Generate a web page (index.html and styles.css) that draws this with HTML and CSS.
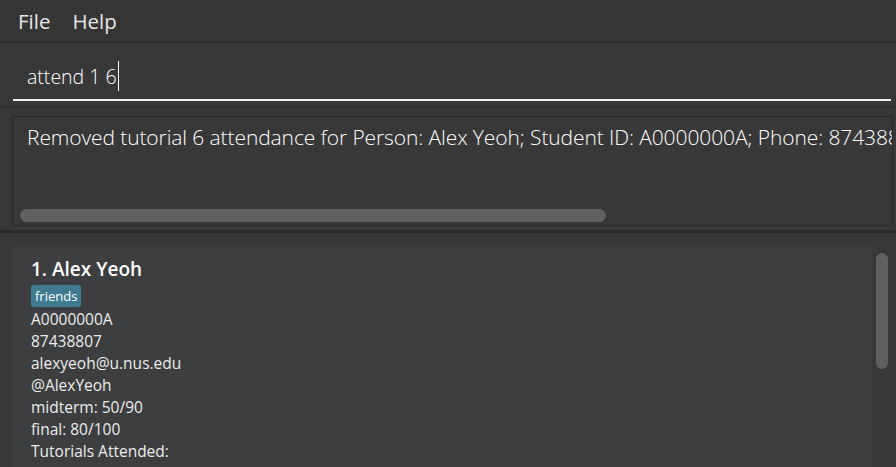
FILE: index.html
```html
<!DOCTYPE html>
<html>
<head>
<meta charset="utf-8">
<link rel="stylesheet" href="styles.css">
</head>
<body>
<div class="app">
  <div class="menubar">
    <span class="menu-item">File</span>
    <span class="menu-item">Help</span>
  </div>
  <div class="command-pane">
    <div class="command-field">
      <span class="command-text">attend 1 6</span><span class="caret"></span>
    </div>
  </div>
  <div class="result-pane">
    <div class="result-box">
      <div class="result-text">Removed tutorial 6 attendance for Person: Alex Yeoh; Student ID: A0000000A; Phone: 87438807</div>
      <div class="hscroll"><div class="hthumb"></div></div>
    </div>
  </div>
  <div class="list-pane">
    <div class="list">
      <div class="card">
        <div class="name">1. Alex Yeoh</div>
        <div class="tags"><span class="tag">friends</span></div>
        <div class="line">A0000000A</div>
        <div class="line">87438807</div>
        <div class="line">alexyeoh@u.nus.edu</div>
        <div class="line">@AlexYeoh</div>
        <div class="line">midterm: 50/90</div>
        <div class="line">final: 80/100</div>
        <div class="line">Tutorials Attended:</div>
      </div>
    </div>
    <div class="vscroll"><div class="vthumb"></div></div>
  </div>
</div>
</body>
</html>
```
FILE: styles.css
```css
html, body {
  margin: 0;
  padding: 0;
  background: #383838;
  overflow: hidden;
}
.app {
  width: 896px;
  height: 467px;
  display: flex;
  flex-direction: column;
  font-family: "Open Sans", "Noto Sans", sans-serif;
  color: #ffffff;
}
.menubar {
  height: 42px;
  background: #353535;
  border-bottom: 1px solid #2b2b2b;
  display: flex;
  align-items: center;
  padding-left: 18px;
  gap: 22px;
  font-size: 20.5px;
  color: #e6e6e6;
  flex: none;
}
.command-pane {
  height: 65px;
  box-sizing: border-box;
  padding: 0 5px 0 13px;
  display: flex;
  align-items: flex-end;
  border-bottom: 2px solid #2e2e2e;
  flex: none;
}
.command-field {
  flex: 1;
  height: 46px;
  margin-bottom: 5px;
  border-bottom: 2px solid #f0f0f0;
  display: flex;
  align-items: center;
  padding-left: 14px;
  font-size: 19.5px;
  font-weight: 300;
}
.caret {
  width: 1px;
  height: 30px;
  background: #ffffff;
  margin-left: 1px;
}
.result-pane {
  height: 125px;
  padding: 8px 3px 0 12px;
  border-bottom: 3px solid #2b2b2b;
  flex: none;
  box-sizing: border-box;
}
.result-box {
  height: 110px;
  border: 1px solid #2a2a2a;
  box-sizing: border-box;
  overflow: hidden;
  display: flex;
  flex-direction: column;
  padding: 6px 0 3px 14px;
}
.result-text {
  white-space: nowrap;
  font-size: 21px;
  font-weight: 300;
  letter-spacing: -0.1px;
  flex: 1;
}
.hscroll {
  height: 13px;
}
.hthumb {
  width: 586px;
  height: 13px;
  margin-left: -7px;
  background: #606060;
  border-radius: 7px;
}
.list-pane {
  flex: 1;
  display: flex;
  padding: 14px 8px 0 12px;
  gap: 4px;
}
.list {
  flex: 1;
  overflow: hidden;
}
.card {
  background: #3c3e3f;
  height: 100%;
  padding: 9px 0 0 19px;
  box-sizing: border-box;
}
.name {
  font-size: 19px;
  font-weight: 600;
  line-height: 26px;
  color: #ffffff;
}
.tags {
  margin-top: 3px;
  margin-bottom: 1px;
  display: flex;
}
.tag {
  background: #3e7b91;
  color: #ffffff;
  font-size: 13px;
  line-height: 22px;
  padding: 0 4px;
  border-radius: 2px;
}
.line {
  font-size: 15.5px;
  line-height: 22px;
  color: #ececec;
}
.vscroll {
  width: 12px;
  padding-top: 6px;
}
.vthumb {
  width: 12px;
  height: 116px;
  background: #606060;
  border-radius: 6px;
}
```
